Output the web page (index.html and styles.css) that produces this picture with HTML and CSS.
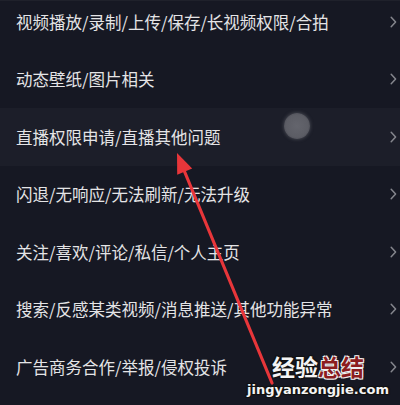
FILE: index.html
```html
<!DOCTYPE html>
<html lang="zh-CN">
<head>
<meta charset="utf-8">
<link rel="stylesheet" href="styles.css">
</head>
<body>
<div class="screen">
  <ul class="list">
    <li class="row"><span class="label">视频播放/录制/上传/保存/长视频权限/合拍</span><svg class="chev" viewBox="0 0 7 12"><path d="M1.2 1.2 L5.6 6 L1.2 10.8"/></svg></li>
    <li class="row"><span class="label">动态壁纸/图片相关</span><svg class="chev" viewBox="0 0 7 12"><path d="M1.2 1.2 L5.6 6 L1.2 10.8"/></svg></li>
    <li class="row active"><span class="label">直播权限申请/直播其他问题</span><svg class="chev" viewBox="0 0 7 12"><path d="M1.2 1.2 L5.6 6 L1.2 10.8"/></svg></li>
    <li class="row"><span class="label">闪退/无响应/无法刷新/无法升级</span><svg class="chev" viewBox="0 0 7 12"><path d="M1.2 1.2 L5.6 6 L1.2 10.8"/></svg></li>
    <li class="row"><span class="label">关注/喜欢/评论/私信/个人主页</span><svg class="chev" viewBox="0 0 7 12"><path d="M1.2 1.2 L5.6 6 L1.2 10.8"/></svg></li>
    <li class="row"><span class="label">搜索/反感某类视频/消息推送/其他功能异常</span><svg class="chev" viewBox="0 0 7 12"><path d="M1.2 1.2 L5.6 6 L1.2 10.8"/></svg></li>
    <li class="row"><span class="label">广告商务合作/举报/侵权投诉</span><svg class="chev" viewBox="0 0 7 12"><path d="M1.2 1.2 L5.6 6 L1.2 10.8"/></svg></li>
  </ul>
  <div class="touch"></div>
  <svg class="arrow" viewBox="0 0 400 405" width="400" height="405">
    <line x1="272" y1="382" x2="181" y2="162" stroke="#e8363a" stroke-width="3.2" stroke-linecap="round"/>
    <polygon points="177,152 192.2,167.6 177.2,173.8" fill="#e8363a"/>
  </svg>
  <div class="watermark">
    <div class="wm-cn"><span class="wm-white">经验</span><span class="wm-red">总结</span></div>
    <div class="wm-en">jingyanzongjie.com</div>
  </div>
</div>
</body>
</html>
```

FILE: styles.css
```css
* { box-sizing: border-box; }
html, body {
  margin: 0;
  padding: 0;
  background: #161823;
}
.screen {
  position: relative;
  width: 400px;
  height: 405px;
  overflow: hidden;
  background: #161823;
  border-top: 1px solid #1f212b;
}
.list {
  list-style: none;
  margin: -8px 0 0 0;
  padding: 0;
}
.row {
  height: 57.5px;
  display: flex;
  align-items: center;
  justify-content: space-between;
  padding: 0 3px 0 16px;
  font-family: "Noto Sans CJK SC", "Noto Sans", sans-serif;
  font-size: 16.5px;
  color: #e4e4e6;
}
.row.active {
  background: #1c1e29;
}
.label {
  white-space: nowrap;
  line-height: 1;
}
.chev {
  width: 7px;
  height: 12px;
  fill: none;
  stroke: #85868d;
  stroke-width: 1.5;
  stroke-linecap: round;
  stroke-linejoin: round;
}
.touch {
  position: absolute;
  left: 284px;
  top: 112px;
  width: 26px;
  height: 26px;
  border-radius: 50%;
  background: radial-gradient(circle, #64656d 0%, #5c5d65 60%, #3a3b44 100%);
  box-shadow: 0 0 3px 1px rgba(80, 81, 90, 0.6);
}
.arrow {
  position: absolute;
  left: 0;
  top: 0;
}
.watermark {
  position: absolute;
  left: 247px;
  top: 353px;
  width: 142px;
  display: flex;
  flex-direction: column;
  align-items: center;
}
.wm-cn {
  font-family: "Noto Sans CJK SC", sans-serif;
  font-weight: 700;
  font-size: 23px;
  line-height: 24px;
}
.wm-white {
  color: #f4f4f4;
  text-shadow: -1px -1px 0 #111, 1px -1px 0 #111, -1px 1px 0 #111, 1px 1px 0 #111, 0 0 2px #000;
}
.wm-red {
  color: #8c1d1f;
  text-shadow: -1px -1px 0 #f0f0f0, 1px -1px 0 #f0f0f0, -1px 1px 0 #f0f0f0, 1px 1px 0 #f0f0f0;
}
.wm-en {
  margin-top: 5px;
  font-family: "DejaVu Sans", sans-serif;
  font-weight: 700;
  font-size: 13px;
  line-height: 14px;
  color: #f4f4f4;
  text-shadow: -1px -1px 0 #111, 1px -1px 0 #111, -1px 1px 0 #111, 1px 1px 0 #111, 0 0 2px #000;
}
```
